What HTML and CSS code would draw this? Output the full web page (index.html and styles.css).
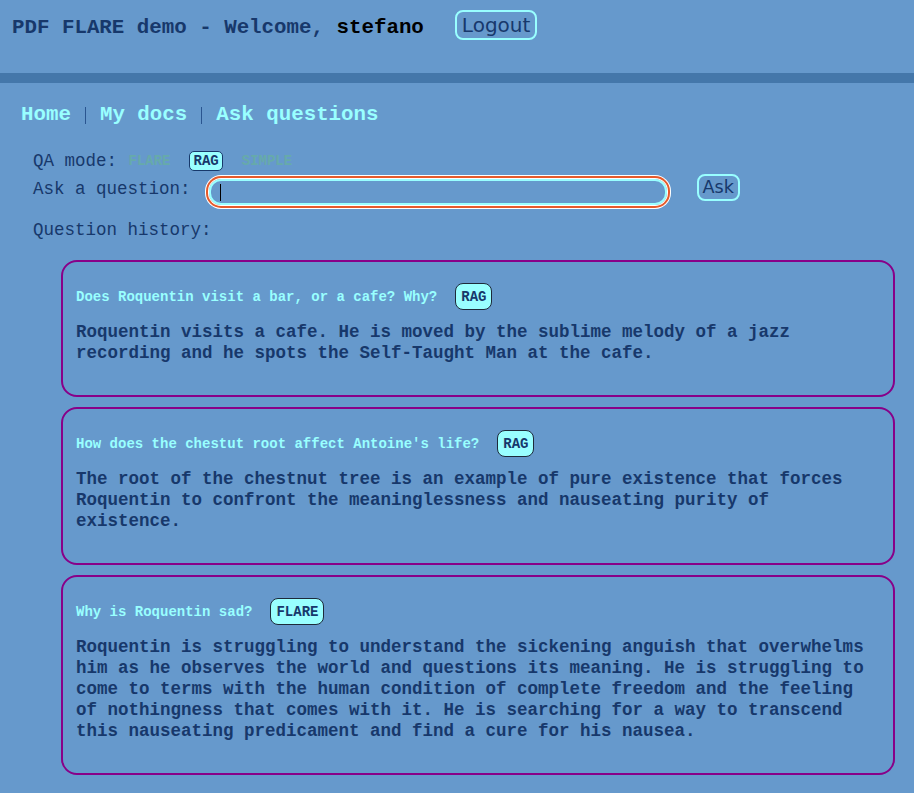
FILE: index.html
```html
<!DOCTYPE html>
<html lang="en">
<head>
<meta charset="utf-8">
<title>PDF FLARE demo</title>
<link rel="stylesheet" href="styles.css">
</head>
<body>
<header class="top">
  <h1 class="title">PDF FLARE demo - Welcome, <span class="user">stefano</span></h1>
  <button class="btn btn-logout">Logout</button>
</header>
<nav class="nav">
  <a class="nav-link" href="#">Home</a><span class="sep"></span><a class="nav-link" href="#">My docs</a><span class="sep"></span><a class="nav-link" href="#">Ask questions</a>
</nav>
<section class="qa">
  <div class="mode-row">
    <span class="label">QA mode:</span>
    <span class="opt">FLARE</span>
    <span class="opt opt-on">RAG</span>
    <span class="opt">SIMPLE</span>
  </div>
  <div class="ask-row">
    <label class="label ask-label" for="q">Ask a question:</label>
    <span class="input-wrap"><input id="q" class="ask-input" type="text"><span class="caret"></span></span>
    <button class="btn btn-ask">Ask</button>
  </div>
  <div class="label history-label">Question history:</div>
</section>
<section class="cards">
  <article class="card">
    <div class="card-head"><span class="question">Does Roquentin visit a bar, or a cafe? Why?</span><span class="badge">RAG</span></div>
    <p class="answer">Roquentin visits a cafe. He is moved by the sublime melody of a jazz recording and he spots the Self-Taught Man at the cafe.</p>
  </article>
  <article class="card">
    <div class="card-head"><span class="question">How does the chestut root affect Antoine's life?</span><span class="badge">RAG</span></div>
    <p class="answer">The root of the chestnut tree is an example of pure existence that forces Roquentin to confront the meaninglessness and nauseating purity of existence.</p>
  </article>
  <article class="card">
    <div class="card-head"><span class="question">Why is Roquentin sad?</span><span class="badge">FLARE</span></div>
    <p class="answer">Roquentin is struggling to understand the sickening anguish that overwhelms him as he observes the world and questions its meaning. He is struggling to come to terms with the human condition of complete freedom and the feeling of nothingness that comes with it. He is searching for a way to transcend this nauseating predicament and find a cure for his nausea.</p>
  </article>
</section>
</body>
</html>
```

FILE: styles.css
```css
html, body {
  margin: 0;
  padding: 0;
}
body {
  background: #6699cc;
  font-family: "Courier New", "Nimbus Mono PS", "Nimbus Mono L", FreeMono, "Liberation Mono", monospace;
  color: #17386b;
  width: 914px;
  min-height: 793px;
}

.top {
  height: 73px;
  box-sizing: content-box;
  border-bottom: 10px solid #4477aa;
  display: flex;
  align-items: flex-start;
  padding: 0 12px;
}
.title {
  margin: 16px 0 0;
  font-size: 20.8px;
  line-height: 24px;
  font-weight: bold;
  color: #17386b;
}
.user {
  color: #000;
}

.btn {
  font-family: "DejaVu Sans", Verdana, sans-serif;
  background: transparent;
  color: #17386b;
  border: 2px solid #99ffff;
  border-radius: 8px;
  cursor: pointer;
}
.btn-logout {
  margin: 10px 0 0 31px;
  font-size: 20px;
  line-height: 24px;
  padding: 1px 5px;
}

.nav {
  padding: 20px 21px 0;
  display: flex;
  align-items: center;
  height: 24px;
}
.nav-link {
  color: #99ffff;
  font-weight: bold;
  font-size: 20.8px;
  line-height: 24px;
  text-decoration: none;
}
.sep {
  display: inline-block;
  width: 1px;
  height: 17px;
  background: #2a5590;
  margin: 0 14px;
}

.qa {
  padding: 24px 0 0 33px;
}
.label {
  font-size: 17.5px;
  line-height: 20px;
  color: #17386b;
}
.mode-row {
  display: flex;
  align-items: center;
  height: 20px;
  gap: 14px;
}
.mode-row .label {
  margin-right: -7px;
}
.opt {
  font-size: 14px;
  line-height: 16px;
  font-weight: bold;
  color: #66aaaa;
  padding: 1px 3.5px;
  border: 1px solid transparent;
  border-radius: 5px;
}
.opt-on {
  background: #99ffff;
  color: #17386b;
  border-color: #17386b;
}

.ask-row {
  display: flex;
  align-items: flex-start;
  margin-top: 3px;
}
.ask-label {
  margin-top: 5px;
}
.input-wrap {
  position: relative;
  margin: 5px 0 0 18px;
  display: block;
  height: 26px;
}
.ask-input {
  display: block;
  box-sizing: border-box;
  width: 458px;
  height: 26px;
  border: 2px solid #99ffff;
  border-radius: 12px;
  background: transparent;
  outline: none;
  padding: 0 10px;
  font-family: "Liberation Mono", monospace;
  font-size: 16px;
  color: #000;
  caret-color: #000;
  box-shadow: 0 0 0 1px #ffffff, 0 0 0 3px #e55a2b, 0 0 0 4px #ffffff;
}
.caret {
  position: absolute;
  left: 11px;
  top: 5px;
  width: 1px;
  height: 17px;
  background: #000;
}
.btn-ask {
  margin-left: 30px;
  font-size: 17.6px;
  line-height: 21px;
  padding: 1px 4px;
}

.history-label {
  margin-top: 15px;
}

.cards {
  padding: 20px 19px 0 61px;
}
.card {
  border: 2px solid #880088;
  border-radius: 16px;
  padding: 21px 13px 31px;
  margin-bottom: 10px;
}
.card-head {
  display: flex;
  align-items: center;
  height: 27px;
}
.question {
  font-size: 14px;
  font-weight: bold;
  color: #99ffff;
}
.badge {
  margin-left: 18px;
  box-sizing: border-box;
  height: 27px;
  padding: 0 5px;
  display: inline-flex;
  align-items: center;
  background: #99ffff;
  border: 1px solid #1d2a3a;
  border-radius: 8px;
  font-size: 14px;
  font-weight: bold;
  color: #17386b;
}
.answer {
  margin: 12px 0 0;
  font-size: 17.5px;
  line-height: 21px;
  font-weight: bold;
  color: #17386b;
}
```
